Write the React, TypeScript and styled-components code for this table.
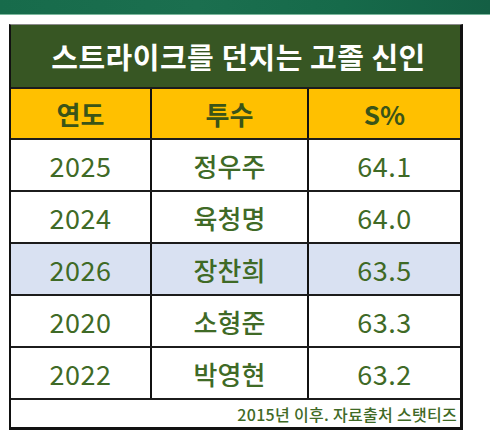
import React from 'react';
import styled, { createGlobalStyle } from 'styled-components';

const GlobalStyle = createGlobalStyle`
  html, body {
    margin: 0;
    padding: 0;
    background: #ffffff;
  }
  body {
    font-family: 'Noto Sans CJK KR', 'Noto Sans', sans-serif;
  }
`;

const Page = styled.div`
  width: 490px;
  height: 440px;
  overflow: hidden;
  background: #ffffff;
`;

const Banner = styled.div`
  height: 14px;
  background: linear-gradient(90deg, #176b4b 0%, #1b6f4f 40%, #166a4a 70%, #145f44 100%);
  border-bottom: 1px solid #7db89e;
`;

const Board = styled.div`
  margin: 9px 0 0 9px;
  width: 449px;
  border-top: 1px solid #8a8a8a;
  border-left: 2px solid #111;
  border-right: 3px solid #111;
  border-bottom: 3px solid #111;
  display: flex;
  flex-direction: column;
`;

const Title = styled.div`
  height: 62px;
  background: #375623;
  color: #ffffff;
  font-size: 29px;
  font-weight: 700;
  letter-spacing: 0.5px;
  display: flex;
  align-items: center;
  justify-content: center;
  padding-left: 6px;
`;

const Row = styled.div<{ $bg: string; $h: number }>`
  display: grid;
  grid-template-columns: 139px 157px 1fr;
  height: ${({ $h }) => $h}px;
  background: ${({ $bg }) => $bg};
  border-top: 2px solid #1c1c1c;
  box-sizing: border-box;
`;

const Cell = styled.div<{ $head?: boolean; $num?: boolean }>`
  display: flex;
  align-items: center;
  justify-content: center;
  color: ${({ $head }) => ($head ? '#3a5418' : '#3f6a26')};
  font-size: ${({ $head, $num }) => ($head ? '26px' : $num ? '27px' : '26px')};
  font-weight: ${({ $head, $num }) => ($head ? 700 : $num ? 400 : 500)};
  letter-spacing: ${({ $num }) => ($num ? '0.5px' : '0')};
  & + & {
    border-left: 2px solid #111;
  }
`;

const Footer = styled.div`
  height: 27px;
  border-top: 2px solid #1c1c1c;
  display: flex;
  align-items: center;
  justify-content: flex-end;
  padding-right: 3px;
  color: #3f6a26;
  font-size: 16px;
  font-weight: 500;
  letter-spacing: 0.3px;
`;

type Pitcher = { year: string; name: string; pct: string; hi?: boolean };

const rows: Pitcher[] = [
  { year: '2025', name: '정우주', pct: '64.1' },
  { year: '2024', name: '육청명', pct: '64.0' },
  { year: '2026', name: '장찬희', pct: '63.5', hi: true },
  { year: '2020', name: '소형준', pct: '63.3' },
  { year: '2022', name: '박영현', pct: '63.2' },
];

const App = () => (
  <Page>
    <GlobalStyle />
    <Banner />
    <Board>
      <Title>스트라이크를 던지는 고졸 신인</Title>
      <Row $bg="#ffc000" $h={51}>
        <Cell $head>연도</Cell>
        <Cell $head>투수</Cell>
        <Cell $head>S%</Cell>
      </Row>
      {rows.map((r) => (
        <Row key={r.year} $bg={r.hi ? '#d9e1f2' : '#ffffff'} $h={52}>
          <Cell $num>{r.year}</Cell>
          <Cell>{r.name}</Cell>
          <Cell $num>{r.pct}</Cell>
        </Row>
      ))}
      <Footer>2015년 이후. 자료출처 스탯티즈</Footer>
    </Board>
  </Page>
);

export default App;
